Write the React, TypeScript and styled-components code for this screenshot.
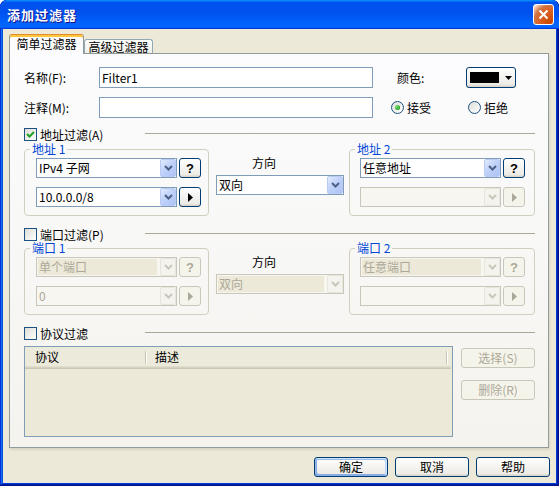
import React from 'react';
import styled, { createGlobalStyle } from 'styled-components';

const GlobalStyle = createGlobalStyle`
  html, body { margin: 0; padding: 0; background: #ffffff; }
  body {
    font-family: "Noto Sans CJK SC", "Liberation Sans", sans-serif;
    font-size: 12px;
    line-height: 14px;
    color: #000;
  }
  * { box-sizing: border-box; }
`;

const Window = styled.div`
  width: 559px;
  height: 486px;
  display: flex;
  flex-direction: column;
  border-radius: 7px 7px 0 0;
  overflow: hidden;
  background: #0831d9;
  box-shadow: inset -1px -1px #00138c, inset 1px 1px #0831d9, inset -2px -2px #001ea0,
    inset 2px 2px #166aee, inset -3px -3px #003bda, inset 3px 3px #0855dd;
`;

const TitleBar = styled.div`
  height: 29px;
  flex-shrink: 0;
  display: flex;
  align-items: center;
  justify-content: space-between;
  padding: 0 5px 0 7px;
  border-radius: 7px 7px 0 0;
  background: linear-gradient(180deg, #0997ff, #0053ee 8%, #0050ee 40%, #0066ff 88%, #0066ff 93%, #005bff 95%, #003dd7 96%, #003dd7);
`;

const Title = styled.span`
  color: #fff;
  font-weight: bold;
  font-size: 13px;
  letter-spacing: 1px;
  text-shadow: 1px 1px #0f1089;
`;

const CloseButton = styled.div`
  width: 21px;
  height: 21px;
  border: 1px solid #fff;
  border-radius: 3px;
  display: flex;
  align-items: center;
  justify-content: center;
  background: radial-gradient(circle at 90% 90%, #cc4600 0, #dc6527 55%, #cd7546 70%, #ffccb2 90%, #fff);
`;

const Client = styled.div`
  flex: 1;
  margin: 0 3px 3px;
  background: #ece9d8;
  padding: 5px 6px 0;
  display: flex;
  flex-direction: column;
`;

const TabStrip = styled.div`
  display: flex;
  align-items: flex-end;
  height: 19px;
  position: relative;
  z-index: 1;
`;

const Tab = styled.div<{ $active?: boolean; $w: number }>`
  width: ${p => p.$w}px;
  height: ${p => (p.$active ? 20 : 14)}px;
  margin-bottom: ${p => (p.$active ? -1 : 0)}px;
  padding-top: ${p => (p.$active ? 2 : 0)}px;
  line-height: 14px;
  text-align: center;
  border: 1px solid ${p => (p.$active ? '#919b9c' : '#91a7b4')};
  border-bottom: none;
  border-top-color: ${p => (p.$active ? '#e68b2c' : '#91a7b4')};
  border-radius: 3px 3px 0 0;
  background: ${p => (p.$active ? '#fcfcfe' : 'linear-gradient(180deg, #fff, #fafaf9 26%, #f0f0ea 95%, #ecebe5)')};
  box-shadow: ${p => (p.$active ? 'inset 0 2px #ffc83c' : 'none')};
`;

const Panel = styled.div`
  width: 540px;
  height: 395px;
  border: 1px solid #919b9c;
  background: linear-gradient(180deg, #fcfcfe, #f4f3ee);
  box-shadow: 1px 2px 2px 0 rgba(208, 206, 191, 0.75);
  padding: 13px 13px 0 14px;
  display: flex;
  flex-direction: column;
`;

const Row = styled.div`
  display: flex;
  align-items: center;
  height: 21px;
  & + & { margin-top: 9px; }
`;

const FieldLabel = styled.span<{ $w: number; $ml?: number }>`
  width: ${p => p.$w}px;
  margin-left: ${p => p.$ml || 0}px;
  white-space: nowrap;
`;

const TextBox = styled.div`
  width: 274px;
  height: 21px;
  border: 1px solid #7f9db9;
  background: #fff;
  padding-left: 2px;
  display: flex;
  align-items: center;
`;

const XPButton = styled.button<{ $w: number; $h?: number; $default?: boolean }>`
  width: ${p => p.$w}px;
  height: ${p => p.$h || 20}px;
  flex-shrink: 0;
  padding: 0;
  font: inherit;
  font-size: 12px;
  line-height: 14px;
  color: #000;
  border: 1px solid #003c74;
  border-radius: 3px;
  background: linear-gradient(180deg, #fff, #ecebe6 86%, #d6d0c5);
  display: flex;
  align-items: center;
  justify-content: center;
  box-shadow: ${p =>
    p.$default
      ? 'inset -1px 1px #cee7ff, inset 1px 2px #98b8ea, inset -2px 2px #bcd4f6, inset 1px -1px #89ade4, inset 2px -2px #89ade4'
      : 'none'};
  &:disabled {
    border-color: #c9c7ba;
    background: #f5f4ea;
    color: #aca899;
  }
`;

const ColorButton = styled(XPButton)`
  justify-content: flex-start;
  padding-left: 3px;
`;

const Swatch = styled.span`
  width: 29px;
  height: 11px;
  background: #000;
  margin-right: 6px;
`;

const Glyph = styled.span`
  font-family: "Liberation Sans", sans-serif;
  font-weight: bold;
  font-size: 13px;
  line-height: 1;
`;

const Radio = styled.label<{ $w?: number; $ml?: number }>`
  display: flex;
  align-items: center;
  gap: 3px;
  width: ${p => (p.$w ? `${p.$w}px` : 'auto')};
  margin-left: ${p => p.$ml || 0}px;
`;

const RadioDot = styled.span<{ $checked?: boolean }>`
  width: 13px;
  height: 13px;
  border-radius: 50%;
  border: 1px solid #1d5281;
  background: linear-gradient(135deg, #dcdcd7, #fff);
  display: flex;
  align-items: center;
  justify-content: center;
  &::after {
    content: '';
    display: ${p => (p.$checked ? 'block' : 'none')};
    width: 5px;
    height: 5px;
    border-radius: 50%;
    background: radial-gradient(circle at 35% 35%, #7ee07a, #21a121 70%);
  }
`;

const SectionHead = styled.div<{ $mt: number }>`
  display: flex;
  align-items: center;
  height: 13px;
  margin-top: ${p => p.$mt}px;
`;

const HeadLabel = styled.label`
  display: flex;
  align-items: center;
  gap: 3px;
  width: 121px;
  height: 13px;
  line-height: 13px;
  white-space: nowrap;
`;

const CheckBox = styled.span`
  width: 13px;
  height: 13px;
  flex-shrink: 0;
  border: 1px solid #1c5180;
  background: linear-gradient(135deg, #dcdcd7, #fff);
  display: flex;
  align-items: center;
  justify-content: center;
`;

const Rule = styled.div`
  flex: 1;
  height: 1px;
  margin-bottom: 2px;
  background: #aca899;
`;

const GroupRow = styled.div<{ $mt: number }>`
  display: flex;
  align-items: flex-start;
  margin-top: ${p => p.$mt}px;
`;

const Group = styled.fieldset<{ $w: number; $pl: number }>`
  width: ${p => p.$w}px;
  min-width: 0;
  margin: 0;
  padding: 2px 0 8px ${p => p.$pl}px;
  border: 1px solid #d0d0bf;
  border-radius: 4px;
`;

const Legend = styled.legend<{ $off: number }>`
  padding: 0 2px;
  margin-left: -${p => p.$off}px;
  line-height: 14px;
  height: 14px;
  color: #0046d5;
`;

const ComboLine = styled.div`
  display: flex;
  align-items: center;
  gap: 2px;
  & + & { margin-top: 9px; }
`;

const Combo = styled.div<{ $w: number; $disabled?: boolean }>`
  width: ${p => p.$w}px;
  height: 20px;
  flex-shrink: 0;
  border: 1px solid ${p => (p.$disabled ? '#c9c7ba' : '#7f9db9')};
  background: ${p => (p.$disabled ? '#f7f6f1' : '#fff')};
  display: flex;
  color: ${p => (p.$disabled ? '#aca899' : '#000')};
`;

const ComboText = styled.div<{ $fill?: boolean }>`
  flex: 1;
  display: flex;
  align-items: center;
  margin: 1px 3px 1px 1px;
  padding-left: 1px;
  white-space: nowrap;
  background: ${p => (p.$fill ? '#ece9d8' : 'transparent')};
`;

const ComboArrow = styled.div<{ $disabled?: boolean }>`
  width: 16px;
  display: flex;
  align-items: center;
  justify-content: center;
  border-radius: 2px;
  border: 1px solid ${p => (p.$disabled ? '#e8e6da' : '#b9cbf3')};
  background: ${p =>
    p.$disabled ? '#f4f3ee' : 'linear-gradient(135deg, #e3ebfe, #c0d2fa 45%, #adc3f5)'};
`;

const Middle = styled.div`
  width: 128px;
  margin: 0 5px 0 7px;
  padding-top: 14px;
`;

const DirLabel = styled.div`
  padding-left: 36px;
  line-height: 14px;
  margin-bottom: 5px;
`;

const ProtoRow = styled.div`
  display: flex;
  align-items: flex-start;
  margin-top: 6px;
`;

const ListView = styled.div`
  width: 429px;
  height: 91px;
  border: 1px solid #7f9db9;
  background: #ece9d8;
`;

const ListHeader = styled.div`
  display: flex;
  align-items: center;
  height: 22px;
  padding-bottom: 3px;
  margin-right: 1px;
  background: #ebeadb;
  box-shadow: inset 0 -1px #cbc7b8, inset 0 -2px #d6d2c2, inset 0 -3px #e2decd;
`;

const HeaderCell = styled.div<{ $w: number; $pl: number }>`
  width: ${p => p.$w}px;
  padding-left: ${p => p.$pl}px;
  line-height: 14px;
`;

const ColDivider = styled.span`
  width: 2px;
  height: 13px;
  margin-top: 1px;
  border-left: 1px solid #c7c5b2;
  border-right: 1px solid #fff;
`;

const SideButtons = styled.div`
  display: flex;
  flex-direction: column;
  gap: 12px;
  margin-left: 8px;
  padding-top: 2px;
`;

const Footer = styled.div`
  display: flex;
  justify-content: flex-end;
  gap: 7px;
  margin-top: 9px;
`;

const Chevron = ({ color }: { color: string }) => (
  <svg width="9" height="6" viewBox="0 0 9 6">
    <path d="M1 1 L4.5 4.5 L8 1" fill="none" stroke={color} strokeWidth="2" />
  </svg>
);

const Play = ({ color }: { color: string }) => (
  <svg width="5" height="9" viewBox="0 0 5 9">
    <polygon points="0,0 5,4.5 0,9" fill={color} />
  </svg>
);

const Check = () => (
  <svg width="9" height="9" viewBox="0 0 9 9">
    <path d="M1 4 L3.5 6.5 L8 2" fill="none" stroke="#21a121" strokeWidth="2" />
  </svg>
);

type ComboProps = { w: number; value?: string; disabled?: boolean; fill?: boolean };

const ComboBox = ({ w, value, disabled, fill }: ComboProps) => (
  <Combo $w={w} $disabled={disabled}>
    <ComboText $fill={fill}>{value}</ComboText>
    <ComboArrow $disabled={disabled}>
      <Chevron color={disabled ? '#c9c7ba' : '#4d6185'} />
    </ComboArrow>
  </Combo>
);

const HelpButton = ({ disabled }: { disabled?: boolean }) => (
  <XPButton $w={22} disabled={disabled}>
    <Glyph>?</Glyph>
  </XPButton>
);

const NextButton = ({ disabled }: { disabled?: boolean }) => (
  <XPButton $w={22} disabled={disabled}>
    <Play color={disabled ? '#aca899' : '#000'} />
  </XPButton>
);

export default function App() {
  return (
    <>
      <GlobalStyle />
      <Window>
        <TitleBar>
          <Title>添加过滤器</Title>
          <CloseButton>
            <svg width="11" height="11" viewBox="0 0 11 11">
              <path d="M1.5 1.5 L9.5 9.5 M9.5 1.5 L1.5 9.5" stroke="#fff" strokeWidth="2" />
            </svg>
          </CloseButton>
        </TitleBar>
        <Client>
          <TabStrip>
            <Tab $active $w={75}>简单过滤器</Tab>
            <Tab $w={69}>高级过滤器</Tab>
          </TabStrip>
          <Panel>
            <Row>
              <FieldLabel $w={75}>名称(F):</FieldLabel>
              <TextBox>Filter1</TextBox>
              <FieldLabel $w={69} $ml={24}>颜色:</FieldLabel>
              <ColorButton $w={50} $h={21}>
                <Swatch />
                <svg width="7" height="4" viewBox="0 0 7 4">
                  <polygon points="0,0 7,0 3.5,4" fill="#000" />
                </svg>
              </ColorButton>
            </Row>
            <Row>
              <FieldLabel $w={75}>注释(M):</FieldLabel>
              <TextBox />
              <Radio $w={77} $ml={18}>
                <RadioDot $checked />
                接受
              </Radio>
              <Radio>
                <RadioDot />
                拒绝
              </Radio>
            </Row>

            <SectionHead $mt={10}>
              <HeadLabel>
                <CheckBox><Check /></CheckBox>
                地址过滤(A)
              </HeadLabel>
              <Rule />
            </SectionHead>
            <GroupRow $mt={1}>
              <Group $w={185} $pl={11}>
                <Legend $off={6}>地址 1</Legend>
                <ComboLine>
                  <ComboBox w={141} value="IPv4 子网" />
                  <HelpButton />
                </ComboLine>
                <ComboLine>
                  <ComboBox w={141} value="10.0.0.0/8" />
                  <NextButton />
                </ComboLine>
              </Group>
              <Middle>
                <DirLabel>方向</DirLabel>
                <ComboBox w={128} value="双向" />
              </Middle>
              <Group $w={186} $pl={10}>
                <Legend $off={5}>地址 2</Legend>
                <ComboLine>
                  <ComboBox w={141} value="任意地址" />
                  <HelpButton />
                </ComboLine>
                <ComboLine>
                  <ComboBox w={141} disabled />
                  <NextButton disabled />
                </ComboLine>
              </Group>
            </GroupRow>

            <SectionHead $mt={12}>
              <HeadLabel>
                <CheckBox />
                端口过滤(P)
              </HeadLabel>
              <Rule />
            </SectionHead>
            <GroupRow $mt={0}>
              <Group $w={185} $pl={11}>
                <Legend $off={6}>端口 1</Legend>
                <ComboLine>
                  <ComboBox w={141} value="单个端口" disabled fill />
                  <HelpButton disabled />
                </ComboLine>
                <ComboLine>
                  <ComboBox w={141} value="0" disabled />
                  <NextButton disabled />
                </ComboLine>
              </Group>
              <Middle>
                <DirLabel>方向</DirLabel>
                <ComboBox w={128} value="双向" disabled fill />
              </Middle>
              <Group $w={186} $pl={10}>
                <Legend $off={5}>端口 2</Legend>
                <ComboLine>
                  <ComboBox w={141} value="任意端口" disabled fill />
                  <HelpButton disabled />
                </ComboLine>
                <ComboLine>
                  <ComboBox w={141} disabled />
                  <NextButton disabled />
                </ComboLine>
              </Group>
            </GroupRow>

            <SectionHead $mt={12}>
              <HeadLabel>
                <CheckBox />
                协议过滤
              </HeadLabel>
              <Rule />
            </SectionHead>
            <ProtoRow>
              <ListView>
                <ListHeader>
                  <HeaderCell $w={120} $pl={10}>协议</HeaderCell>
                  <ColDivider />
                  <HeaderCell $w={299} $pl={8}>描述</HeaderCell>
                  <ColDivider />
                </ListHeader>
              </ListView>
              <SideButtons>
                <XPButton $w={74} disabled>选择(S)</XPButton>
                <XPButton $w={74} disabled>删除(R)</XPButton>
              </SideButtons>
            </ProtoRow>
          </Panel>
          <Footer>
            <XPButton $w={74} $default>确定</XPButton>
            <XPButton $w={74}>取消</XPButton>
            <XPButton $w={74}>帮助</XPButton>
          </Footer>
        </Client>
      </Window>
    </>
  );
}
